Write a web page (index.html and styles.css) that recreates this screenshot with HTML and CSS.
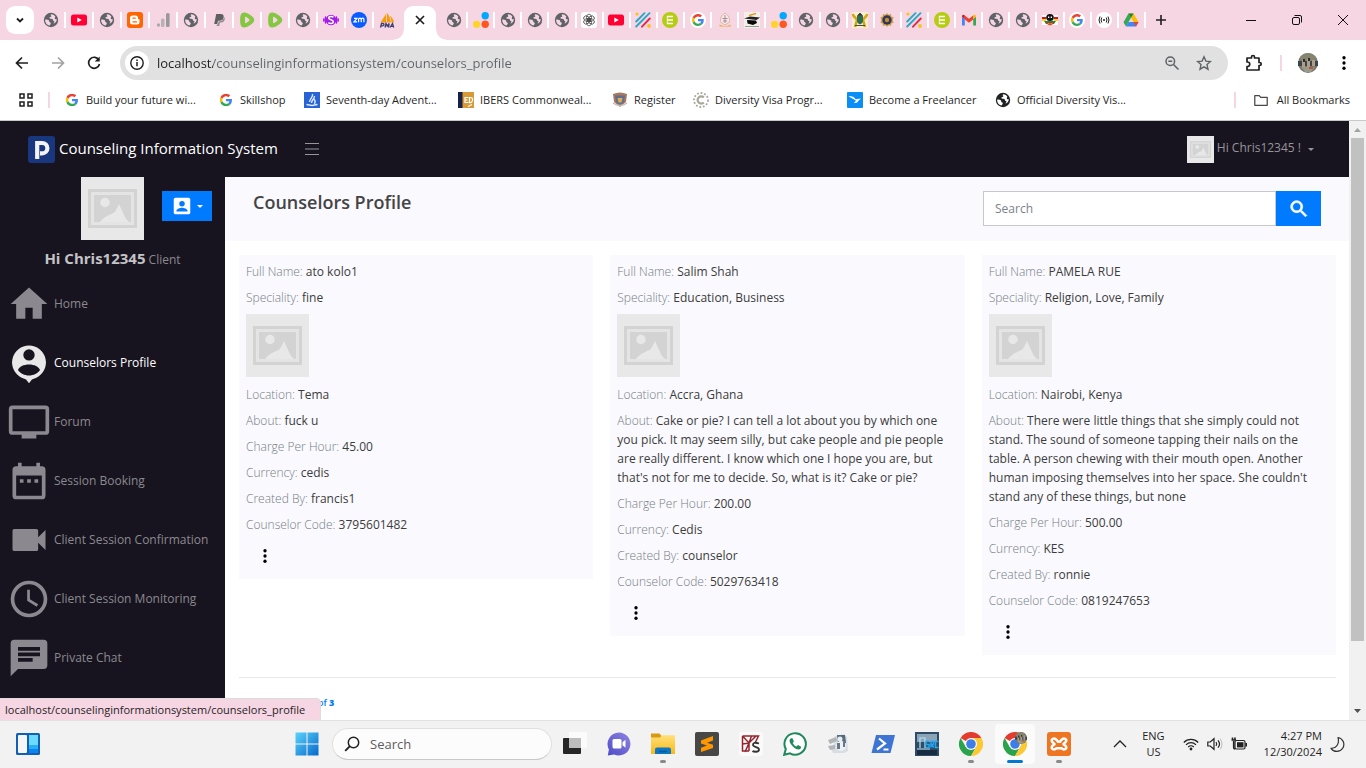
FILE: index.html
```html
<!DOCTYPE html>
<html lang="en">
<head>
    <meta charset="UTF-8">
    <meta name="viewport" content="width=device-width, initial-scale=1.0">
    <title>Counselors Profile</title>
    <link rel="stylesheet" href="styles.css">
</head>
<body>
    <!-- Icon sprite -->
    <svg class="sprite" aria-hidden="true">
        <defs>
            <linearGradient id="win-blue" x1="0" y1="0" x2="1" y2="1"><stop offset="0" stop-color="#5bd3fb"/><stop offset="1" stop-color="#0668cb"/></linearGradient>
            <linearGradient id="chat-purple" x1="0" y1="1" x2="1" y2="0"><stop offset="0" stop-color="#4f4cc8"/><stop offset="1" stop-color="#8f84e0"/></linearGradient>
            <linearGradient id="folder-yellow" x1="0" y1="0" x2="0" y2="1"><stop offset="0" stop-color="#ffe07a"/><stop offset="1" stop-color="#f9b917"/></linearGradient>
        </defs>
        <symbol id="globe" viewBox="0 0 16 16"><circle cx="8" cy="8" r="7.2" fill="#5f6368"/><path d="M2.2 7.4c1.600 0 3.200.100 3.800 1 .5.700-.2 1.600.8 1.800 1.100.2.900 1 .9 1.600 0 .8-1 .9-1 1.700C3.800 13 1.800 10.300 2.200 7.400zM8.200 2.200c-.9.600-.4 1.500.2 1.700-.2 1.200-1.800.8-2 1.900-.1.800 1.100 1 2 .9 1.200-.1 1.500.8 1.600 1.600.2.900 1.400.5 1.500 1.300 0 .8-.9 1-.9 1.900 1.700-.5 3.200-1.900 3.200-4.300-1 .3-1.700-.1-2-.8-.3-.8.600-1.200.5-2-1.100-1.500-2.500-2.200-4.100-2.200z" fill="#f7d6e4"/></symbol>
        <symbol id="globe-dark" viewBox="0 0 16 16"><circle cx="8" cy="8" r="7.200" fill="#202124"/><path d="M2.200 7.400c1.600 0 3.200.1 3.800 1 .5.7-.2 1.600.8 1.800 1.100.2.900 1 .9 1.600 0 .8-1 .9-1 1.700C3.800 13 1.800 10.300 2.200 7.400zM8.200 2.200c-.9.600-.4 1.500.2 1.700-.2 1.200-1.800.8-2 1.900-.1.800 1.100 1 2 .9 1.200-.1 1.500.8 1.600 1.600.2.900 1.400.5 1.500 1.300 0 .8-.9 1-.9 1.900 1.700-.5 3.200-1.900 3.200-4.300-1 .3-1.700-.1-2-.8-.3-.8.600-1.200.5-2-1.100-1.500-2.500-2.200-4.100-2.200z" fill="#fff"/></symbol>
        <symbol id="youtube" viewBox="0 0 16 16"><rect x="0" y="2.500" width="16" height="11" rx="2.500" fill="#ff0033"/><path d="M6.300 5.500v5L10.800 8z" fill="#fff"/></symbol>
        <symbol id="blogger" viewBox="0 0 16 16"><rect width="16" height="16" rx="3" fill="#ff6600"/><path d="M5.500 3.500h3a2.500 2.500 0 0 1 2.500 2.500c0 1 .3 1.200 1.200 1.300.3.100.3.300.3.700v2a2.500 2.500 0 0 1-2.500 2.500H5.500A2.500 2.500 0 0 1 3 10V6a2.500 2.500 0 0 1 2.500-2.500z" fill="#fff"/><path d="M6 6.200h2.200M6 9.800h3.600" stroke="#ff6600" stroke-width="1.300" stroke-linecap="round"/></symbol>
        <symbol id="analytics" viewBox="0 0 16 16"><circle cx="3.500" cy="13" r="1.700" fill="#aaa"/><rect x="6" y="6.500" width="3.500" height="8.500" rx="1.500" fill="#b8b1b5"/><rect x="11" y="1" width="3.600" height="14" rx="1.500" fill="#999"/></symbol>
        <symbol id="paypal" viewBox="0 0 16 16"><path d="M5.200 2h4.500c2.600 0 3.300 1.500 2.900 3.400-.4 2.300-2 3.300-4.300 3.300H7L6.300 12H3.200z" fill="#5f5f63"/><path d="M12.900 5c.9.700 1 1.700.7 2.800-.5 2-1.900 2.700-3.700 2.700h-1l-.7 3.500H5.600l.3-1.600h1L7.600 9.300h1.200c2.400 0 3.900-1.400 4.100-4.300z" fill="#8a878b"/></symbol>
        <symbol id="rumble" viewBox="0 0 16 16"><path d="M1.200 5.500C1.400 2 3 .2 5.500.5c3 .4 6.500 2.600 8.800 5.100 1.300 1.500 1.300 3.300 0 4.800-2.300 2.500-5.800 4.700-8.800 5.100-2.500.3-4.100-1.500-4.300-5a40 40 0 0 1 0-5z" fill="#85c742"/><path d="M6 5.700c0-.8.600-1 1.200-.7 1 .5 2 1.200 2.800 2 .6.600.6 1.300 0 1.900-.8.800-1.800 1.500-2.800 2-.6.300-1.200.100-1.200-.7z" fill="#f7d6e4"/></symbol>
        <symbol id="scribe" viewBox="0 0 16 16"><path d="M2.500 5v6M.8 7v2M13.500 5v6M15.200 7v2" stroke="#a51de8" stroke-width="1.500" stroke-linecap="round"/><circle cx="8" cy="8" r="5.300" fill="#a51de8"/><path d="M10.500 5.300C9 4 5.500 4.200 5.700 6.100 5.900 8 10.400 7.700 10.400 9.900c0 1.900-3.600 2.100-5 .7" fill="none" stroke="#fff" stroke-width="1.500"/></symbol>
        <symbol id="zoom" viewBox="0 0 16 16"><circle cx="8" cy="8" r="8" fill="#0b5cff"/><path d="M3 6.300h3L3 9.800h3.200M7.600 10.200V7.300c0-1.600 2.600-1.600 2.600 0v2.900M10.200 7.300c0-1.600 2.700-1.600 2.700 0v2.900" fill="none" stroke="#fff" stroke-width="1.200"/></symbol>
        <symbol id="pma" viewBox="0 0 16 16"><path d="M1.500 10.500 7 2v8.500zM7.800 10.500V.5c2.500 3 3.600 6.300 4 10zM12.300 10.500c0-3-.6-5-1.500-7 2.500 2 3.800 4.400 4.300 7z" fill="#f89c0e"/><path d="M1.500 15.500l1-4h1.500c1.500 0 1.200 2.300-.5 2.300H2.200M6 15.500l1-4 1.200 2.500 2-2.500-.8 4M11 15.500l2.500-4 1.200 4M12 14.300h2.400" fill="none" stroke="#3d3f73" stroke-width="1.300"/></symbol>
        <symbol id="dots3" viewBox="0 0 16 16"><circle cx="12.200" cy="3.700" r="3.700" fill="#00a8ff"/><circle cx="12.200" cy="12.300" r="3.700" fill="#ff5722"/><circle cx="3.600" cy="12.300" r="3.600" fill="#ffd42a"/></symbol>
        <symbol id="gpt" viewBox="0 0 16 16"><rect width="16" height="16" rx="3" fill="#fff"/><g fill="none" stroke="#333" stroke-width=".7"><ellipse cx="8" cy="5.600" rx="2.500" ry="3.500"/><ellipse cx="8" cy="5.600" rx="2.500" ry="3.500" transform="rotate(60 8 8)"/><ellipse cx="8" cy="5.600" rx="2.500" ry="3.500" transform="rotate(120 8 8)"/><ellipse cx="8" cy="5.600" rx="2.500" ry="3.500" transform="rotate(180 8 8)"/><ellipse cx="8" cy="5.600" rx="2.500" ry="3.500" transform="rotate(240 8 8)"/><ellipse cx="8" cy="5.600" rx="2.500" ry="3.500" transform="rotate(300 8 8)"/></g></symbol>
        <symbol id="stripes" viewBox="0 0 16 16"><g stroke-width="1.900" stroke-linecap="round"><path d="M1.200 9.500 9.500 1.200M1.200 14.500 14.500 1.200" stroke="#28a9c9"/><path d="M7 14.700 14.800 6.500" stroke="#dd2c4a"/></g><circle cx="2" cy="2" r="1.600" fill="#f8c21c"/><circle cx="14" cy="14" r="1.900" fill="#f8c21c"/></symbol>
        <symbol id="ebars" viewBox="0 0 16 16"><circle cx="8" cy="8" r="8" fill="#b5cc12"/><path d="M5.300 4v8" stroke="#fff" stroke-width=".8"/><path d="M5 4.500h6M5 8h6M5 11.500h6" stroke="#fff" stroke-width="1.600"/></symbol>
        <symbol id="google" viewBox="0 0 48 48"><path fill="#ea4335" d="M24 9.500c3.500 0 6.700 1.200 9.200 3.600l6.900-6.900C35.900 2.400 30.500 0 24 0 14.600 0 6.500 5.400 2.600 13.200l8 6.200C12.400 13.700 17.700 9.500 24 9.500z"/><path fill="#4285f4" d="M47 24.600c0-1.600-.2-3.100-.4-4.600H24v9h12.900c-.6 3-2.300 5.500-4.800 7.200l7.700 6C44.400 38 47 31.800 47 24.600z"/><path fill="#fbbc05" d="M10.500 28.600A14 14 0 0 1 9.800 24c0-1.600.3-3.100.8-4.600l-8-6.200A24 24 0 0 0 0 24c0 3.900.9 7.500 2.600 10.800z"/><path fill="#34a853" d="M24 48c6.500 0 11.900-2.100 15.900-5.800l-7.700-6c-2.200 1.500-4.900 2.300-8.200 2.300-6.300 0-11.600-4.200-13.500-9.900l-8 6.200C6.500 42.600 14.600 48 24 48z"/></symbol>
        <symbol id="google-disc" viewBox="0 0 16 16"><circle cx="8" cy="8" r="8" fill="#fff"/><use href="#google" x="2" y="2" width="12" height="12"/></symbol>
        <symbol id="crest" viewBox="0 0 16 16"><path d="M8 1c3.500 2.500 5 5 4.500 9L8 13l-4.500-3C3 6 4.500 3.500 8 1z" fill="#f6e8e2" stroke="#e0b5a8"/><path d="M8 3v8M5.500 6.500h5M6 9h4" stroke="#a88aa5"/><path d="M2.500 12.500q5.500 3 11 0v2H2.500z" fill="#e9ae3f"/></symbol>
        <symbol id="cap" viewBox="0 0 16 16"><rect width="16" height="16" fill="#f3f0ea"/><path d="M0 6.500 6 4.500l10 1L12.500 8z" fill="#222"/><path d="M3 8l9 .5 1 2.500-4 2-5.500-1.500z" fill="#080808"/><path d="M5 3.500 12 1.500" stroke="#dd9e2b" stroke-width="1.500"/><path d="M1 14.500h14" stroke="#8ca28f"/></symbol>
        <symbol id="ghana" viewBox="0 0 16 16"><rect width="16" height="16" fill="#f6efd2"/><path d="M.5 2c2 4 4 4 4.500 6L3 15M15.500 2c-2 4-4 4-4.500 6l2 7" fill="none" stroke="#d9a514" stroke-width="2.600"/><path d="M5 4h6v5c0 2-2 3-3 3.500C7 12 5 11 5 9z" fill="#2c6f57"/><path d="M5.500 3.500 8 1l2.500 2.500zM3 13.500h10" fill="#2b333b" stroke="#4a513a"/></symbol>
        <symbol id="sunseal" viewBox="0 0 16 16"><path d="m8 1 1.500 1.700L12 2l.4 2.400 2.300.8L13.600 8l1.100 2.800-2.300.8L12 14l-2.500-.7L8 15l-1.500-1.700L4 14l-.4-2.400-2.300-.8L2.400 8 1.300 5.200l2.300-.8L4 2l2.500.7z" fill="#c9a04b"/><circle cx="8" cy="8" r="4.700" fill="#353454"/><circle cx="8" cy="8" r="2.200" fill="#b88f3a"/></symbol>
        <symbol id="gmail" viewBox="0 0 16 16"><path d="M1 13.500h2.800V7L1 4.800z" fill="#4285f4"/><path d="M12.200 13.500H15V4.800L12.200 7z" fill="#34a853"/><path d="M1 4.800 3.800 7V3.500C2.500 2.300 1 2.700 1 4.800z" fill="#c5221f"/><path d="M12.200 3.500V7L15 4.800c0-2.100-1.500-2.500-2.800-1.300z" fill="#fbbc04"/><path d="M3.800 3.500 8 6.700l4.200-3.200V7.600L8 10.700 3.800 7.600z" fill="#ea4335"/></symbol>
        <symbol id="mascot" viewBox="0 0 16 16"><path d="M0 3h16v10H0z" fill="#fff"/><path d="M0 5h4v2H0zM12 5h4v2h-4z" fill="#d8142d"/><path d="M0 7h4v2H0zM12 7h4v2h-4z" fill="#f4d51e"/><path d="M2 9h12l-2 3H4z" fill="#188948"/><ellipse cx="8" cy="5.500" rx="3.800" ry="3.500" fill="#111"/><path d="M6 4.500h1.300v1.500H6zM8.700 4.500H10v1.500H8.700z" fill="#fff"/><path d="M5 10q3 2.500 6 0v1.500q-3 3-6 0z" fill="#edc91d" stroke="#c62e26"/></symbol>
        <symbol id="antenna" viewBox="0 0 16 16"><circle cx="8" cy="8" r="8" fill="#fff"/><circle cx="8" cy="8" r="1" fill="#222"/><g fill="none" stroke="#222"><path d="M5.800 5.500q-1.500 2.500 0 5M10.200 5.500q1.500 2.500 0 5M4 4.500q-2 3.500 0 7M12 4.500q2 3.500 0 7"/></g></symbol>
        <symbol id="drive" viewBox="0 0 16 16"><path d="M5.500 1.500h5L15.500 10h-5z" fill="#fbbc04"/><path d="M5.500 1.500 8 5.800 3 14.500.5 10.200z" fill="#34a853"/><path d="M5.500 10h10L13 14.500H3z" fill="#4285f4"/><path d="M5.500 1.500h5L8 5.800z" fill="#188038"/><path d="M15.500 10h-5l2.500 4.500z" fill="#ea4335"/></symbol>

        <!-- Empty picture placeholder -->
        <symbol id="photo" viewBox="0 0 63 63"><rect width="63" height="63" fill="#e8e8e8"/><rect x="7" y="12" width="49" height="39" fill="#d3d3d3"/><rect x="10" y="15" width="43" height="33" fill="#e4e4e4"/><rect x="13" y="18" width="37" height="27" fill="#d3d3d3"/><circle cx="24" cy="25.500" r="4.700" fill="#e8e8e8"/><path d="M19 45c4-5 7-6 11-8 3-1 4-2 5-4l3-6 5 11c1 3 3 5 5 7z" fill="#e8e8e8"/></symbol>
        <symbol id="more" viewBox="0 0 24 24"><circle cx="12" cy="5" r="2.200"/><circle cx="12" cy="12" r="2.200"/><circle cx="12" cy="19" r="2.200"/></symbol>
        <symbol id="folder" viewBox="0 0 18 16"><path d="M2 3h5l1.700 2H16v9H2z" fill="none" stroke="#474747" stroke-width="1.400" stroke-linejoin="round"/></symbol>
        <symbol id="chrome" viewBox="0 0 24 24"><path d="M12 12 1.600 6A12 12 0 0 1 22.400 6z" fill="#e33b2e"/><path d="M12 24A12 12 0 0 1 1.600 6l5.200 9L17.200 15z" fill="#2ba24c"/><path d="M12 6h10.400A12 12 0 0 1 12 24l5.200-9z" fill="#fcc934"/><circle cx="12" cy="12" r="6" fill="#fff"/><circle cx="12" cy="12" r="4.800" fill="#3f7ee8"/></symbol>
        <symbol id="portrait" viewBox="0 0 20 20"><circle cx="10" cy="10" r="10" fill="#77766a"/><path d="M1 6a10 10 0 0 1 18 0l-4 2H5z" fill="#85846f"/><path d="M0 8h20v5H0z" fill="#394650"/><path d="M4 7h3v7H4zM9 6h3v8H9zM14 7h3v6h-3z" fill="#b09f86"/><path d="M5 6h2v3H5zM10 5h2v3h-2z" fill="#302c25"/><path d="M3 14h14l-4 5H7z" fill="#999a8c"/><path d="M11 15h4" stroke="#b7563c" stroke-width="2"/></symbol>
    </svg>

    <!-- Tab strip -->
    <header class="tab-strip">
        <button class="tab-search" aria-label="Search tabs"><svg viewBox="0 0 12 12"><path d="m3 4.500 3 3 3-3" fill="none" stroke="#1f1f1f" stroke-width="1.800"/></svg></button>
        <div class="tabs tabs-left">
            <span class="tab"><svg><use href="#globe"/></svg></span>
            <span class="tab"><svg><use href="#youtube"/></svg></span>
            <span class="tab"><svg><use href="#globe"/></svg></span>
            <span class="tab"><svg><use href="#blogger"/></svg></span>
            <span class="tab"><svg><use href="#analytics"/></svg></span>
            <span class="tab"><svg><use href="#globe"/></svg></span>
            <span class="tab"><svg><use href="#paypal"/></svg></span>
            <span class="tab"><svg><use href="#rumble"/></svg></span>
            <span class="tab"><svg><use href="#rumble"/></svg></span>
            <span class="tab"><svg><use href="#globe"/></svg></span>
            <span class="tab"><svg><use href="#scribe"/></svg></span>
            <span class="tab"><svg><use href="#zoom"/></svg></span>
            <span class="tab"><svg><use href="#pma"/></svg></span>
        </div>
        <div class="tab-active"><button aria-label="Close tab"><svg viewBox="0 0 12 12"><path d="m2 2 8 8M10 2l-8 8" stroke="#1f1f1f" stroke-width="1.700"/></svg></button></div>
        <div class="tabs tabs-right">
            <span class="tab"><svg><use href="#globe"/></svg></span>
            <span class="tab"><svg><use href="#dots3"/></svg></span>
            <span class="tab"><svg><use href="#globe"/></svg></span>
            <span class="tab"><svg><use href="#globe"/></svg></span>
            <span class="tab"><svg><use href="#globe"/></svg></span>
            <span class="tab"><svg><use href="#gpt"/></svg></span>
            <span class="tab"><svg><use href="#youtube"/></svg></span>
            <span class="tab"><svg><use href="#stripes"/></svg></span>
            <span class="tab"><svg><use href="#ebars"/></svg></span>
            <span class="tab"><svg><use href="#google-disc"/></svg></span>
            <span class="tab"><svg><use href="#crest"/></svg></span>
            <span class="tab"><svg><use href="#cap"/></svg></span>
            <span class="tab"><svg><use href="#dots3"/></svg></span>
            <span class="tab"><svg><use href="#globe"/></svg></span>
            <span class="tab"><svg><use href="#globe"/></svg></span>
            <span class="tab"><svg><use href="#ghana"/></svg></span>
            <span class="tab"><svg><use href="#sunseal"/></svg></span>
            <span class="tab"><svg><use href="#stripes"/></svg></span>
            <span class="tab"><svg><use href="#ebars"/></svg></span>
            <span class="tab"><svg><use href="#gmail"/></svg></span>
            <span class="tab"><svg><use href="#globe"/></svg></span>
            <span class="tab"><svg><use href="#globe"/></svg></span>
            <span class="tab"><svg><use href="#mascot"/></svg></span>
            <span class="tab"><svg><use href="#google-disc"/></svg></span>
            <span class="tab"><svg><use href="#antenna"/></svg></span>
            <span class="tab"><svg><use href="#drive"/></svg></span>
        </div>
        <button class="tab-new" aria-label="New tab"><svg viewBox="0 0 12 12"><path d="M6 1v10M1 6h10" stroke="#1f1f1f" stroke-width="1.600"/></svg></button>
        <div class="window-buttons">
            <button aria-label="Minimize"><svg viewBox="0 0 12 12"><path d="M1 6.500h10" stroke="#111"/></svg></button>
            <button aria-label="Restore"><svg viewBox="0 0 12 12"><g fill="none" stroke="#111"><rect x="1.500" y="3.500" width="7" height="7" rx="1.500"/><path d="M3.500 1.500H9q1.500 0 1.500 1.500v5.500"/></g></svg></button>
            <button aria-label="Close"><svg viewBox="0 0 12 12"><path d="m1 1 10 10M11 1 1 11" stroke="#111"/></svg></button>
        </div>
    </header>

    <!-- Address bar -->
    <div class="toolbar">
        <button aria-label="Back"><svg viewBox="0 0 16 16"><path d="M14 8H3M8 2.500 2.500 8 8 13.500" fill="none" stroke="#1f1f1f" stroke-width="1.700"/></svg></button>
        <button aria-label="Forward"><svg viewBox="0 0 16 16"><path d="M2 8h11M8 2.500 13.500 8 8 13.500" fill="none" stroke="#a2a2a2" stroke-width="1.700"/></svg></button>
        <button aria-label="Reload"><svg viewBox="0 0 16 16"><path d="M13 5.200A5.500 5.500 0 1 0 13.500 9" fill="none" stroke="#1f1f1f" stroke-width="1.700"/><path d="M13.700 1.500v5h-5z" fill="#1f1f1f"/></svg></button>
        <div class="address">
            <button class="site-info" aria-label="Site information"><svg viewBox="0 0 16 16"><circle cx="8" cy="8" r="6.200" fill="none" stroke="#1f1f1f" stroke-width="1.400"/><path d="M8 7v4.200M8 4.500v1.500" stroke="#1f1f1f" stroke-width="1.500"/></svg></button>
            <input type="text" aria-label="Address" value="localhost/counselinginformationsystem/counselors_profile">
            <button aria-label="Zoom"><svg viewBox="0 0 16 16"><circle cx="6.300" cy="6.300" r="4.300" fill="none" stroke="#5f6368" stroke-width="1.500"/><path d="m9.500 9.500 5 5M4.300 6.300h4" stroke="#5f6368" stroke-width="1.500"/></svg></button>
            <button aria-label="Bookmark this tab"><svg viewBox="0 0 16 16"><path d="m8 1.800 1.900 4.300 4.600.4-3.500 3.100 1 4.600-4-2.400-4 2.400 1-4.600L1.500 6.500l4.600-.4z" fill="none" stroke="#5f6368" stroke-width="1.400"/></svg></button>
        </div>
        <button class="extensions" aria-label="Extensions"><svg viewBox="0 0 18 18"><path d="M2 4h4.500V3a1.500 1.500 0 0 1 3 0v1H14v4.500h.7a1.500 1.500 0 0 1 0 3H14V16H2v-3.500h.5a2.200 2.200 0 0 0 0-4.500H2z" fill="none" stroke="#1f1f1f" stroke-width="1.700" stroke-linejoin="round"/></svg></button>
        <span class="divider"></span>
        <button class="account" aria-label="Account"><svg><use href="#portrait"/></svg></button>
        <button class="browser-menu" aria-label="Menu"><svg viewBox="0 0 24 24"><use href="#more"/></svg></button>
    </div>

    <!-- Bookmarks -->
    <nav class="bookmarks">
        <button class="apps" aria-label="Apps"><svg viewBox="0 0 14 14"><g fill="none" stroke="#1f1f1f" stroke-width="1.500"><path d="M1 1h4v4H1zM9 1h4v4H9zM1 9h4v4H1zM9 9h4v4H9z"/></g></svg></button>
        <span class="divider"></span>
        <div class="bookmark-list">
            <a href="#"><svg viewBox="-1 -1 18 18"><use href="#google" x="1" y="1" width="14" height="14"/></svg>Build your future wi...</a>
            <a href="#"><svg viewBox="-1 -1 18 18"><use href="#google" x="1" y="1" width="14" height="14"/></svg>Skillshop</a>
            <a href="#"><svg viewBox="0 0 16 16"><rect width="16" height="16" fill="#2863d5"/><path d="M8.500 2c1 3-3 5-3 8M10.500 4c0 3-3 4-3 7M10 7c2 2 1 3 .5 5M2.500 12.500l5.500 1 5.500-1" fill="none" stroke="#dce7ff" stroke-width="1.400"/></svg>Seventh-day Advent...</a>
            <a href="#"><svg viewBox="0 0 16 16"><rect width="16" height="16" fill="#d99a36"/><rect width="4.500" height="16" fill="#17224a"/><path d="M6.500 5.500h4M6.500 8h3M6.500 10.500h4M7 5v6M11.500 5.500q4 0 3 3-.5 2.500-3 2.200zM10 14.500l4-2" fill="none" stroke="#fff" stroke-width="1.200"/></svg>IBERS Commonweal...</a>
            <a href="#"><svg viewBox="0 0 16 16"><path d="M1 2q7-3 14 0l-1 8-6 5-6-5z" fill="#a8795f"/><path d="M3 3.500h10L12 10l-4 3.500L4 10z" fill="#626d93"/><path d="M5.500 6h5l-1 4.500h-3z" fill="#e0ad4c"/><path d="M1 11q7 5 14 0" fill="none" stroke="#c8bbb7" stroke-width="1.500"/></svg>Register</a>
            <a href="#"><svg viewBox="0 0 16 16"><circle cx="8" cy="8" r="7" fill="none" stroke="#aaa59a" stroke-width="1.800" stroke-dasharray="1.800 1.800"/><path d="M10.800 5.500A3.600 3.600 0 1 0 10.800 10.500" fill="none" stroke="#aaa59a" stroke-width="2.200"/></svg>Diversity Visa Progr...</a>
            <a href="#"><svg viewBox="0 0 16 16"><rect width="16" height="16" rx="1" fill="#0a8df5"/><path d="M1.500 4q5.500 0 7 3.200l5.500-.7-2.500 2.300q-1.500 3-4.500 2l2-2C6.500 6.500 4 6.500 1.500 4z" fill="#fff"/></svg>Become a Freelancer</a>
            <a href="#"><svg><use href="#globe-dark"/></svg>Official Diversity Vis...</a>
        </div>
        <span class="divider"></span>
        <button class="all-bookmarks"><svg><use href="#folder"/></svg>All Bookmarks</button>
    </nav>

    <!-- Page -->
    <div class="viewport">
        <div class="app">
            <div class="navbar">
                <a class="brand" href="#"><svg viewBox="0 0 27 27"><rect width="27" height="27" rx="3" fill="#19377f"/><path d="M9.200 23V7h5a5.200 5.200 0 0 1 0 10.400H12" fill="none" stroke="#f4f4f8" stroke-width="4.200"/></svg>Counseling Information System</a>
                <button class="toggler" aria-label="Toggle menu"><svg viewBox="0 0 16 14"><path d="M1 1.500h14M1 7h14M1 12.500h14" stroke="#97959b" stroke-width="1.200"/></svg></button>
                <button class="user-menu"><svg><use href="#photo"/></svg>Hi Chris12345 !<i class="caret"></i></button>
            </div>
            <div class="columns">
                <aside class="sidebar">
                    <div class="user-card">
                        <svg class="avatar"><use href="#photo"/></svg>
                        <button class="btn-blue" aria-label="Account options"><svg viewBox="0 0 24 24"><path d="M5 3h14a2 2 0 0 1 2 2v14a2 2 0 0 1-2 2H5a2 2 0 0 1-2-2V5a2 2 0 0 1 2-2z" fill="#fff"/><circle cx="12" cy="9.500" r="3" fill="#007bff"/><path d="M6 18v-1c0-2 4-3.100 6-3.100s6 1.100 6 3.100v1z" fill="#007bff"/></svg><i class="caret"></i></button>
                    </div>
                    <div class="user-name"><strong>Hi Chris12345</strong> Client</div>
                    <nav class="side-menu">
                        <a href="#"><svg viewBox="0 0 24 24"><path d="M10 20v-6h4v6h5v-8h3L12 3 2 12h3v8z"/></svg>Home</a>
                        <a href="#" class="active"><svg viewBox="0 0 24 24"><path fill-rule="evenodd" d="M12 2.500a9.200 9.200 0 0 0-4 17.500l2.400 1L12 23l1.600-2 2.400-1A9.200 9.200 0 0 0 12 2.500zm0 2a3.100 3.100 0 1 1 0 6.200 3.100 3.100 0 0 1 0-6.200zm0 8.300c3 0 5.300 1.200 6 3-1.200 1.800-3.500 3-6 3s-4.800-1.200-6-3c.7-1.800 3-3 6-3z"/></svg>Counselors Profile</a>
                        <a href="#"><svg viewBox="0 0 24 24"><path d="M21 3H3a2 2 0 0 0-2 2v12a2 2 0 0 0 2 2h5v2h8v-2h5a2 2 0 0 0 2-2V5a2 2 0 0 0-2-2zm0 14H3V5h18z"/></svg>Forum</a>
                        <a href="#"><svg viewBox="0 0 24 24"><path d="M9 11H7v2h2zm4 0h-2v2h2zm4 0h-2v2h2zm2-7h-1V2h-2v2H8V2H6v2H5a2 2 0 0 0-2 2v14a2 2 0 0 0 2 2h14a2 2 0 0 0 2-2V6a2 2 0 0 0-2-2zm0 16H5V9h14z"/></svg>Session Booking</a>
                        <a href="#"><svg viewBox="0 0 24 24"><path d="M17 10.500V7a1 1 0 0 0-1-1H4a1 1 0 0 0-1 1v10a1 1 0 0 0 1 1h12a1 1 0 0 0 1-1v-3.500l4 4v-11z"/></svg>Client Session Confirmation</a>
                        <a href="#"><svg viewBox="0 0 24 24"><path d="M12 2a10 10 0 1 0 0 20 10 10 0 0 0 0-20zm0 18a8 8 0 1 1 0-16 8 8 0 0 1 0 16zm.5-13H11v6l5.200 3.200.8-1.300-4.500-2.700z"/></svg>Client Session Monitoring</a>
                        <a href="#"><svg viewBox="0 0 24 24"><path d="M20 2H4a2 2 0 0 0-2 2v18l4-4h14a2 2 0 0 0 2-2V4a2 2 0 0 0-2-2zM6 9h12v2H6zm8 5H6v-2h8zm4-6H6V6h12z"/></svg>Private Chat</a>
                    </nav>
                </aside>
                <main class="content">
                    <div class="page-header">
                        <h1>Counselors Profile</h1>
                        <form class="search">
                            <input type="text" placeholder="Search" aria-label="Search">
                            <button type="button" class="btn-blue" aria-label="Search"><svg viewBox="0 0 24 24"><path fill="#fff" stroke="#fff" stroke-width=".8" d="M15.500 14h-.8l-.3-.3a6.500 6.500 0 1 0-.7.700l.3.300v.8l5 5 1.500-1.500zm-6 0a4.500 4.500 0 1 1 0-9 4.500 4.500 0 0 1 0 9z"/></svg></button>
                        </form>
                    </div>
                    <div class="cards">
                        <article class="card">
                            <p><span>Full Name:</span> ato kolo1</p>
                            <p><span>Speciality:</span> fine</p>
                            <svg class="photo"><use href="#photo"/></svg>
                            <p><span>Location:</span> Tema</p>
                            <p><span>About:</span> fuck u</p>
                            <p><span>Charge Per Hour:</span> 45.00</p>
                            <p><span>Currency:</span> cedis</p>
                            <p><span>Created By:</span> francis1</p>
                            <p><span>Counselor Code:</span> 3795601482</p>
                            <button class="more" aria-label="More"><svg><use href="#more"/></svg></button>
                        </article>
                        <article class="card">
                            <p><span>Full Name:</span> Salim Shah</p>
                            <p><span>Speciality:</span> Education, Business</p>
                            <svg class="photo"><use href="#photo"/></svg>
                            <p><span>Location:</span> Accra, Ghana</p>
                            <p><span>About:</span> Cake or pie? I can tell a lot about you by which one you pick. It may seem silly, but cake people and pie people are really different. I know which one I hope you are, but that's not for me to decide. So, what is it? Cake or pie?</p>
                            <p><span>Charge Per Hour:</span> 200.00</p>
                            <p><span>Currency:</span> Cedis</p>
                            <p><span>Created By:</span> counselor</p>
                            <p><span>Counselor Code:</span> 5029763418</p>
                            <button class="more" aria-label="More"><svg><use href="#more"/></svg></button>
                        </article>
                        <article class="card">
                            <p><span>Full Name:</span> PAMELA RUE</p>
                            <p><span>Speciality:</span> Religion, Love, Family</p>
                            <svg class="photo"><use href="#photo"/></svg>
                            <p><span>Location:</span> Nairobi, Kenya</p>
                            <p><span>About:</span> There were little things that she simply could not stand. The sound of someone tapping their nails on the table. A person chewing with their mouth open. Another human imposing themselves into her space. She couldn't stand any of these things, but none</p>
                            <p><span>Charge Per Hour:</span> 500.00</p>
                            <p><span>Currency:</span> KES</p>
                            <p><span>Created By:</span> ronnie</p>
                            <p><span>Counselor Code:</span> 0819247653</p>
                            <button class="more" aria-label="More"><svg><use href="#more"/></svg></button>
                        </article>
                    </div>
                    <div class="pager">of <b>3</b></div>
                </main>
            </div>
        </div>
        <div class="scrollbar">
            <svg viewBox="0 0 17 17"><path d="M5 11h7L8.500 7z" fill="#a3a3a3"/></svg>
            <div class="thumb"></div>
            <svg viewBox="0 0 17 17"><path d="M5 6h7l-3.500 4z" fill="#505050"/></svg>
        </div>
        <div class="status">localhost/counselinginformationsystem/counselors_profile</div>
    </div>

    <!-- Taskbar -->
    <footer class="taskbar">
        <button class="task widgets" aria-label="Widgets"><svg viewBox="0 0 24 24"><rect y="1" width="24" height="22" rx="1.500" fill="#1160b5"/><rect x="2" y="3" width="9" height="18" rx="1" fill="#f6f6f6"/><rect x="13" y="3" width="9" height="10" fill="#6bdcff"/><rect x="13" y="13" width="9" height="4" fill="#27aef8"/><rect x="13" y="17" width="9" height="4" fill="#0a84ee"/></svg></button>
        <div class="task-center">
            <button class="task" aria-label="Start"><svg viewBox="0 0 24 24"><path d="M.5.500h11v11H.5zM12.500.500h11v11h-11zM.5 12.500h11v11H.5zM12.500 12.500h11v11h-11z" fill="url(#win-blue)"/></svg></button>
            <label class="task-search"><svg viewBox="0 0 16 16"><circle cx="9.500" cy="6.500" r="5.200" fill="none" stroke="#222" stroke-width="1.500"/><path d="m5.700 10.300-4.500 4.500" stroke="#222" stroke-width="1.900"/></svg><input type="text" placeholder="Search" aria-label="Search Windows"></label>
            <button class="task" aria-label="Task view"><svg viewBox="0 0 24 24"><rect y="6" width="18" height="16" rx="1" fill="#262626"/><rect x="6" y="0" width="18" height="16" rx="1" fill="#fbfbfb"/><path d="M6 6h12v10H6z" fill="#bdbdbd"/></svg></button>
            <button class="task" aria-label="Chat"><svg viewBox="0 0 24 24"><path d="M12 .500a11.500 11.500 0 1 1-5 21.900L.8 23.500 1.900 17.500A11.500 11.500 0 0 1 12 .500z" fill="url(#chat-purple)"/><rect x="5.500" y="7" width="9" height="9.500" rx="1.500" fill="#fff"/><path d="m15.500 10.300 3-2.500v8l-3-2.500z" fill="#fff"/></svg></button>
            <button class="task running" aria-label="File Explorer"><svg viewBox="0 0 24 24"><path d="M0 1.500h8.500l2 2.500H24v6H0z" fill="#d99a0d"/><path d="M0 5.500h9l2-2.200h13V22H0z" fill="url(#folder-yellow)"/><path d="M4 22v-4.500q0-2 2-2h12q2 0 2 2V22z" fill="#0d77c4"/><path d="M8 19.500h8" stroke="#075a9c" stroke-width="1.500"/></svg></button>
            <button class="task" aria-label="Sublime Text"><svg viewBox="0 0 24 24"><rect width="24" height="24" rx="2" fill="#474747"/><path d="M6 8.500 18 4v4.500l-6 2.300 6 2V16L6 20v-4.300l6-2.200-6-2z" fill="#ff9800"/></svg></button>
            <button class="task" aria-label="Spyder"><svg viewBox="0 0 24 24"><rect width="24" height="24" rx="3" fill="#fafafa"/><path d="M3.500 4h16l-3 6M3.500 4v15h6.500M3.500 4l6.500 7 7-7M3.500 12 10 11v8M6 20l4-9M12.500 4l-2.500 7" fill="none" stroke="#97242c" stroke-width="1.500"/><path d="M20 11.500q-6-2-6 1.300c0 3 6 1.500 6 4.700 0 3.500-6 2-6.500 1.500" fill="none" stroke="#333" stroke-width="1.800"/></svg></button>
            <button class="task" aria-label="WhatsApp"><svg viewBox="0 0 24 24"><path d="m1.200 22.800 1.600-5.700A10.700 10.700 0 1 1 7 21.300z" fill="#fff" stroke="#20895b" stroke-width="2"/><path d="M8 6.300c-1.800.8-2 3.200-.2 5.800 2 3 4.700 5.300 7.600 5.300 2 0 3-1.800 2.700-2.700L15 13l-1.600 1.500c-1.500-.5-3-2-3.700-3.500L10.900 9.500 9.500 6.300z" fill="#20895b"/></svg></button>
            <button class="task" aria-label="Camera tool"><svg viewBox="0 0 24 24"><path d="M8 4 17 2l3 3 1 14-4 2H6l-2-5 3-4z" fill="#d8dde1"/><path d="m1 8 8-3 1 4-7 3zM1 14l7-1v4l-5 1z" fill="#b2b5b8"/><path d="M10 3h8l1 8h-8z" fill="#566b7e"/><circle cx="13" cy="7" r="2.500" fill="#e9eef2"/><circle cx="14" cy="14" r="5" fill="#eef1f3"/><path d="M10 11h3v6h-3zM16 10h2v5h-2z" fill="#66798b"/></svg></button>
            <button class="task" aria-label="PowerShell"><svg viewBox="0 0 24 24"><path d="M5 3h19l-4.500 18H.500z" fill="#3e74d2"/><path d="m8 6.500 6 5-8 6M12.500 17.500h5" fill="none" stroke="#fff" stroke-width="2.200"/></svg></button>
            <button class="task" aria-label="SRC"><svg viewBox="0 0 24 24"><rect width="24" height="24" fill="#2f4c66"/><rect x="2" y="2" width="20" height="8" fill="#8ba4b8"/><rect x="2" y="18" width="20" height="5" fill="#172c40"/><path d="M5 16V6h5v10M2 17h13" fill="none" stroke="#b6e2f6" stroke-width="1.200"/><path d="M14 9.500h-3v3h3v3h-3M16 15.500v-6h2.500v3H16l3 3M23.500 9.500h-3v6h3" fill="none" stroke="#23a4f0" stroke-width="1.500"/></svg></button>
            <button class="task running" aria-label="Chrome"><svg><use href="#chrome"/></svg></button>
            <button class="task running current" aria-label="Chrome window"><svg viewBox="0 0 24 24"><use href="#chrome" width="24" height="24"/><use href="#portrait" x="12" y="0" width="12" height="12"/></svg></button>
            <button class="task running" aria-label="XAMPP"><svg viewBox="0 0 24 24"><rect width="24" height="24" rx="3" fill="#ee7623"/><path d="M9.500 7.800C7 5 4 7.200 5 9.500c.5 1.200 2 1.200 2.500 2.500-.5 1.300-2 1.300-2.500 2.500-1 2.300 2 4.500 4.500 1.700h5c2.500 2.800 5.500.6 4.500-1.700-.5-1.200-2-1.200-2.500-2.500.5-1.300 2-1.300 2.500-2.500 1-2.300-2-4.500-4.500-1.700l-1.500 2h-2z" fill="none" stroke="#fff" stroke-width="2.500" stroke-linejoin="round"/></svg></button>
        </div>
        <div class="tray">
            <svg viewBox="0 0 16 16"><path d="m2 11 6-6 6 6" fill="none" stroke="#222" stroke-width="1.300"/></svg>
            <div class="lang">ENG<br>US</div>
            <div class="tray-icons">
                <svg viewBox="0 0 16 16"><g fill="none" stroke="#222" stroke-width="1.200"><path d="M.8 6.500a10 10 0 0 1 14.400 0M3 8.800a7 7 0 0 1 10 0M5.200 11a4 4 0 0 1 5.600 0"/></g><circle cx="8" cy="13" r="1.400" fill="#222"/></svg>
                <svg viewBox="0 0 16 16"><g fill="none" stroke="#222" stroke-width="1.200"><path d="M.800 6h2.500L7 2.700v10.600L3.300 10H.8zM9 6q1.500 2 0 4M11 4.300q3 3.700 0 7.400"/><path d="M13 2.500q4 5.500 0 11" stroke="#c5c5c5"/></g></svg>
                <svg viewBox="0 0 16 16"><rect x="4" y="4.500" width="10" height="8.500" rx="1.500" fill="none" stroke="#222" stroke-width="1.200"/><rect x="6" y="6.200" width="6.500" height="5.200" fill="#222"/><path d="M15.200 7v3.500M.5 4h4.500M1.500 1.500V4M4 1.500V4M2.700 5v6.500q0 1.500 1.500 1.500" fill="none" stroke="#222" stroke-width="1.600"/></svg>
            </div>
            <div class="clock">4:27 PM<br>12/30/2024</div>
            <svg viewBox="0 0 16 16"><path d="M8 1.500a7 7 0 1 1-7 10.800C7 12.500 9.500 7 8 1.500z" fill="none" stroke="#333" stroke-width="1.200" stroke-linejoin="round"/></svg>
        </div>
    </footer>
</body>
</html>
```

FILE: styles.css
```css
* {
    box-sizing: border-box;
}
body {
    margin: 0;
    height: 100vh;
    display: flex;
    flex-direction: column;
    overflow: hidden;
    font-family: "Open Sans", "Noto Sans", sans-serif;
    font-size: 12px;
    color: #1f1f1f;
    background-color: #fff;
}
button,
input {
    font: inherit;
    color: inherit;
    border: none;
    background: none;
    padding: 0;
    margin: 0;
    outline: none;
}
button {
    cursor: pointer;
    display: flex;
    align-items: center;
    justify-content: center;
}
a {
    color: inherit;
    text-decoration: none;
}
svg {
    display: block;
    flex: none;
    width: 16px;
    height: 16px;
}
.sprite {
    position: absolute;
    width: 0;
    height: 0;
}

/* Tab strip */
.tab-strip {
    height: 40px;
    flex: none;
    display: flex;
    align-items: center;
    background-color: #f7d6e4;
}
.tab-search {
    width: 28px;
    height: 28px;
    margin: 0 4px 0 6px;
    border-radius: 9px;
    background-color: #fff;
}
.tab-search svg,
.tab-active svg,
.tab-new svg,
.window-buttons svg {
    width: 12px;
    height: 12px;
}
.tabs {
    display: flex;
}
.tabs-left {
    width: 364px;
}
.tabs-right {
    width: 705px;
}
.tab {
    flex: 1;
    height: 16px;
    display: flex;
    justify-content: center;
    border-right: 2px solid #fff;
}
.tabs-left .tab:last-child {
    border-color: transparent;
}
.tab-active {
    align-self: flex-end;
    width: 32px;
    height: 34px;
    margin: 0 5px 0 2px;
    display: flex;
    justify-content: center;
    padding-bottom: 6px;
    border-radius: 9px 9px 0 0;
    background-color: #fff;
    position: relative;
}
/* flared feet of the active tab */
.tab-active::before,
.tab-active::after {
    content: "";
    position: absolute;
    bottom: 0;
    width: 10px;
    height: 10px;
}
.tab-active::before {
    right: 100%;
    background: radial-gradient(circle at 0 0, transparent 9px, #fff 10px);
}
.tab-active::after {
    left: 100%;
    background: radial-gradient(circle at 100% 0, transparent 9px, #fff 10px);
}
.tab-new {
    width: 28px;
    height: 28px;
    margin-left: 1px;
}
.window-buttons {
    margin-left: auto;
    display: flex;
}
.window-buttons button {
    width: 46px;
    height: 40px;
}

/* Address bar */
.toolbar {
    height: 46px;
    flex: none;
    display: flex;
    align-items: center;
    padding: 0 4px;
}
.toolbar > button {
    width: 36px;
    height: 36px;
}
.address {
    flex: 1;
    height: 34px;
    margin: 0 8px;
    padding: 0 8px 0 5px;
    display: flex;
    align-items: center;
    border-radius: 17px;
    background-color: #e1e1e1;
}
.address .site-info {
    width: 24px;
    height: 24px;
    border-radius: 50%;
    background-color: #fff;
}
.address button {
    width: 32px;
    height: 32px;
}
.address input {
    flex: 1;
    margin-left: 8px;
    font-size: 13px;
    color: transparent;
    background: linear-gradient(90deg, #1f1f1f 56px, #5f6368 56px);
    -webkit-background-clip: text;
    background-clip: text;
}
.toolbar .extensions svg {
    width: 18px;
    height: 18px;
}
.divider {
    width: 2px;
    height: 16px;
    background-color: #f7d6e4;
}
.toolbar .divider {
    margin: 0 8px;
}
.account svg {
    width: 20px;
    height: 20px;
}
.browser-menu svg {
    width: 18px;
    height: 18px;
}

/* Bookmarks */
.bookmarks {
    height: 35px;
    flex: none;
    display: flex;
    align-items: center;
    padding: 0 16px 7px 18px;
    font-size: 11px;
    border-bottom: 1px solid #c9c9c9;
}
.apps svg {
    width: 14px;
    height: 14px;
}
.apps {
    width: 16px;
    margin-right: 14px;
}
.bookmark-list {
    flex: 1;
    display: grid;
    grid-template-columns: 154px 86px 154px 154px 81px 154px 148px 1fr;
    margin-left: 14px;
    white-space: nowrap;
}
.bookmark-list a,
.all-bookmarks {
    display: flex;
    align-items: center;
    gap: 6px;
}
.all-bookmarks {
    gap: 8px;
    margin-left: 17px;
}

/* Page */
.viewport {
    flex: 1;
    min-height: 0;
    display: flex;
    position: relative;
}
.app {
    flex: 1;
    min-width: 0;
    display: flex;
    flex-direction: column;
    overflow: hidden;
}
.navbar {
    height: 56px;
    flex: none;
    display: flex;
    align-items: center;
    padding: 0 35px 0 28px;
    background-color: #17141f;
    color: #97959b;
}
.brand,
.user-menu {
    display: flex;
    align-items: flex-start;
    line-height: 24px;
}
.brand {
    gap: 4px;
    font-size: 15px;
    color: #fff;
}
.brand svg,
.user-menu svg {
    width: 27px;
    height: 27px;
}
.toggler {
    margin-left: 26px;
}
.toggler svg {
    height: 14px;
}
.user-menu {
    margin-left: auto;
    gap: 3px;
}
.caret {
    align-self: center;
    margin-left: 4px;
    border: 3px solid transparent;
    border-top-color: currentColor;
    border-bottom: none;
}
.columns {
    flex: 1;
    min-height: 0;
    display: flex;
}
.sidebar {
    width: 225px;
    flex: none;
    background-color: #17141f;
    color: #8b898f;
}
.user-card {
    display: flex;
    align-items: flex-start;
    justify-content: flex-end;
    gap: 18px;
    padding-right: 13px;
}
.avatar,
.photo {
    width: 63px;
    height: 63px;
}
.photo {
    margin-bottom: 1px;
}
.btn-blue {
    background-color: #007bff;
    color: #fff;
}
.btn-blue svg {
    width: 22px;
    height: 22px;
}
.user-card .btn-blue {
    width: 50px;
    height: 30px;
    margin-top: 14px;
}
.user-name {
    height: 34px;
    line-height: 36px;
    text-align: center;
}
.user-name strong {
    font-size: 15px;
    color: #c4c3c7;
}
.side-menu a {
    height: 59px;
    display: flex;
    align-items: center;
    gap: 3px;
    padding-left: 7px;
}
.side-menu svg {
    width: 44px;
    height: 44px;
    fill: #8b898f;
}
.side-menu .active {
    color: #fff;
}
.side-menu .active svg {
    fill: #e8e8e9;
}
.content {
    flex: 1;
    min-width: 0;
}
.page-header {
    height: 64px;
    display: flex;
    justify-content: space-between;
    padding: 14px 28px;
    background-color: #f9f9fe;
}
h1 {
    margin: 0;
    font-size: 18px;
    line-height: 22px;
    font-weight: 600;
    color: #444;
}
.search {
    width: 338px;
    height: 35px;
    display: flex;
}
.search input {
    flex: 1;
    min-width: 0;
    padding: 0 11px;
    border: 1px solid #c6c8cb;
    background-color: #fff;
}
.search input::placeholder {
    color: #7b828a;
}
.search .btn-blue {
    width: 45px;
}
.cards {
    display: grid;
    grid-template-columns: repeat(3, 1fr);
    gap: 17px;
    align-items: start;
    margin: 14px 13px 22px 14px;
}
.card {
    display: flex;
    flex-direction: column;
    align-items: flex-start;
    gap: 7px;
    padding: 7px 7px 8px;
    background-color: #f9f9fe;
    color: #3c3c3c;
}
.card p {
    margin: 0;
    line-height: 19px;
}
.card span {
    font-weight: 300;
    color: #777d83;
}
.more {
    width: 38px;
    height: 30px;
}
.more svg {
    width: 18px;
    height: 18px;
    fill: #000;
}
.pager {
    margin: 0 13px 0 14px;
    padding: 18px 0 0 79px;
    border-top: 1px solid #e8e8e8;
    font-size: 9px;
    font-weight: 600;
    line-height: 14px;
    color: #007bff;
}
.scrollbar {
    width: 17px;
    display: flex;
    flex-direction: column;
    background-color: #f1f1f1;
}
.scrollbar svg {
    width: 17px;
    height: 17px;
}
.thumb {
    flex: none;
    height: 84%;
    margin: 0 2px auto;
    background-color: #c1c1c1;
}
.status {
    position: absolute;
    left: 0;
    bottom: 0;
    height: 22px;
    padding: 0 15px 0 5px;
    font-size: 11px;
    line-height: 21px;
    border: 1px solid #dcdcdc;
    border-width: 1px 1px 0 0;
    border-radius: 0 5px 0 0;
    background-color: #f7d6e4;
}

/* Taskbar */
.taskbar {
    height: 48px;
    flex: none;
    display: grid;
    grid-template-columns: 1fr auto 1fr;
    align-items: center;
    padding-bottom: 1px;
    border-top: 1px solid #e2e2e2;
    background-color: #f2f2f2;
}
.task {
    width: 44px;
    height: 40px;
    position: relative;
}
.task svg {
    width: 24px;
    height: 24px;
}
.widgets {
    margin-left: 6px;
}
.task-center {
    display: flex;
    align-items: center;
}
.task-search {
    width: 220px;
    height: 32px;
    margin: 0 1px 0 3px;
    padding: 0 11px;
    display: flex;
    align-items: center;
    gap: 10px;
    border: 1px solid #e0e0e0;
    border-bottom-color: #c9c9c9;
    border-radius: 16px;
    background-color: #fcfcfc;
}
.task-search input {
    flex: 1;
    min-width: 0;
    font-size: 13px;
}
.task-search input::placeholder {
    color: #5d5d5d;
}
/* marker under open programs */
.running::after {
    content: "";
    position: absolute;
    left: 50%;
    bottom: 1px;
    width: 6px;
    height: 3px;
    margin-left: -3px;
    border-radius: 2px;
    background-color: #8a8a8a;
}
.current {
    width: 40px;
    margin: 0 2px;
    border-radius: 4px;
    background-color: #fbfbfb;
}
.current::after {
    width: 16px;
    margin-left: -8px;
    background-color: #0078d4;
}
.tray {
    display: flex;
    align-items: center;
    justify-content: flex-end;
    padding-right: 20px;
    font-size: 11px;
    line-height: 16px;
}
.lang {
    margin: 0 18px 0 14px;
    text-align: center;
}
.tray-icons {
    display: flex;
    gap: 8px;
    margin-right: 17px;
}
.clock {
    margin-right: 8px;
    text-align: right;
}
```
